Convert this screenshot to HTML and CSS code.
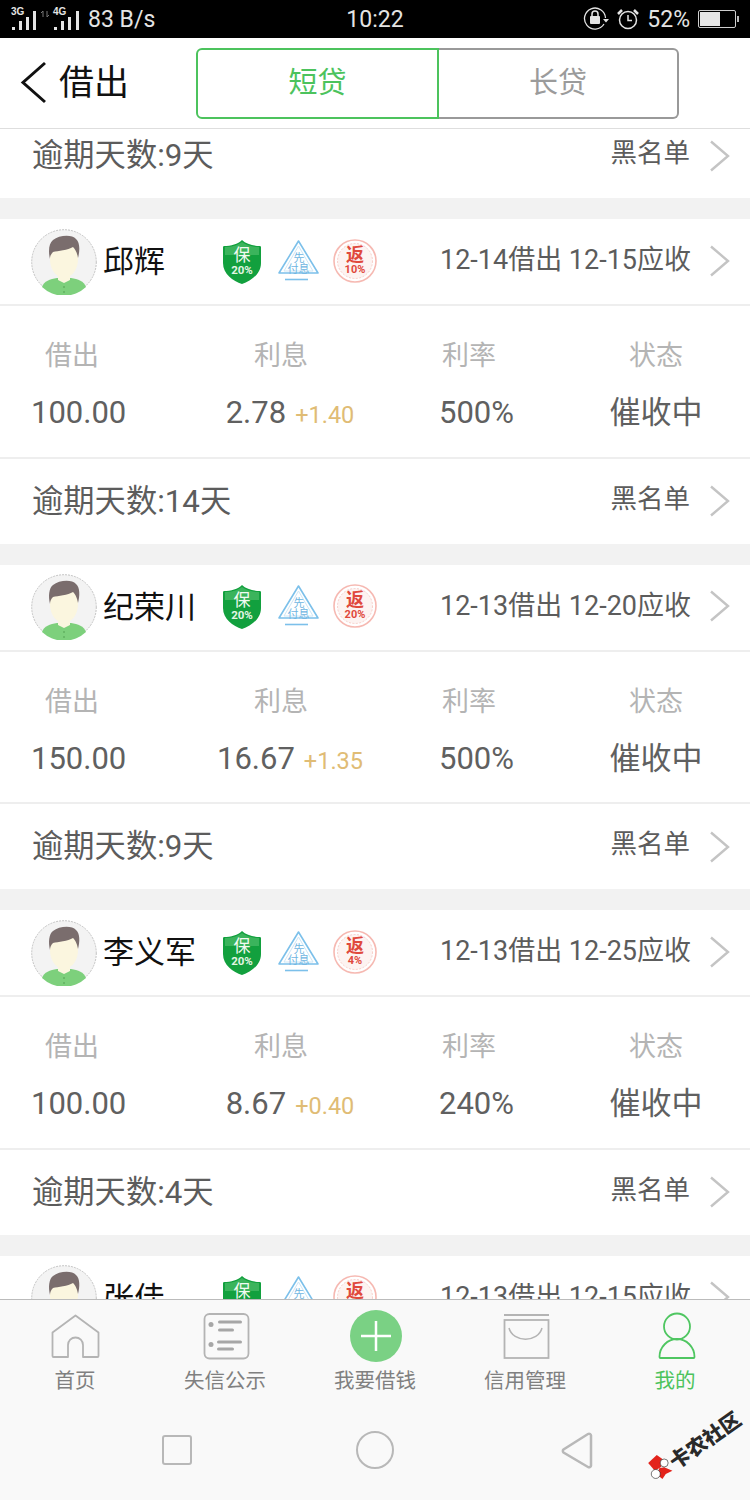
FILE: index.html
```html
<!DOCTYPE html>
<html lang="zh">
<head>
<meta charset="utf-8">
<title>借出</title>
<link rel="stylesheet" href="styles.css">
</head>
<body>
<svg class="defs" width="0" height="0">
  <symbol id="avatar" viewBox="0 0 66 66">
    <circle cx="33" cy="33" r="32.3" fill="#f3f3f3" stroke="#b5b5b5" stroke-width="0.8" stroke-dasharray="2 1"/>
    <path d="M11 58c2-6 8-8 15-9h14c7 1 13 3 15 9a32 32 0 0 1-44 0z" fill="#7dd07c"/>
    <path d="M19 30c0 10 5 15 8 17v4l6 3 6-3v-4c3-2 8-7 8-17V16H19z" fill="#fbf6df"/>
    <path d="M19 30c-2-8-1-16 3-19 6-5 19-6 23-1 4 3 4 12 2 19-1-6-3-9-5-11-5 3-15 4-20 5-2 2-3 4-3 7z" fill="#7a6d6d"/>
    <circle cx="33" cy="58" r="0.8" fill="#4f9c4e"/><circle cx="33" cy="63" r="0.8" fill="#4f9c4e"/>
  </symbol>
  <symbol id="shield" viewBox="0 0 40 46">
    <path d="M20 1c4 4 11 6 18 6 1 0 1 1 1 2v15c0 11-10 18-19 21C11 42 1 35 1 24V9c0-1 0-2 1-2 7 0 14-2 18-6z" fill="#12a03e"/>
    <path d="M20 3c4 3 10 5 17 5v8H3V8c7 0 13-2 17-5z" fill="#3bb45c"/>
  </symbol>
  <symbol id="triangle" viewBox="0 0 42 44">
    <path d="M20.500 2 L40 34 H1 Z" fill="#fff" stroke="#7cc0ea" stroke-width="1.6" stroke-linejoin="round"/>
    <path d="M20.500 7 L35 32 H6 Z" fill="none" stroke="#cfe7f6" stroke-width="1"/>
    <path d="M7 40.500 H30" stroke="#7cc0ea" stroke-width="1.6"/>
  </symbol>
  <symbol id="seal" viewBox="0 0 44 44">
    <circle cx="22" cy="22" r="21" fill="#fff" stroke="#f6b9b2" stroke-width="1.6"/>
    <circle cx="22" cy="22" r="17.5" fill="#fdf3f1" stroke="#f8cfca" stroke-width="1" stroke-dasharray="2 1.5"/>
  </symbol>
  <symbol id="chev" viewBox="0 0 20 32">
    <path d="M1 1.500 L18 16 L1 30.500" fill="none" stroke="#c4c4c4" stroke-width="2.4"/>
  </symbol>
</svg>

<div class="phone">
  <div class="status">
    <div class="status-left">
      <svg class="signal" width="84" height="30" viewBox="0 0 84 30">
        <text x="11" y="13" class="net">3G</text>
        <g fill="#e4e4e4"><rect x="12" y="25" width="3" height="3"/><rect x="19" y="19" width="3" height="9"/><rect x="26" y="15" width="3" height="13"/><rect x="33" y="9" width="3" height="19"/></g>
        <path d="M43 9V15M47 9V15M41 11L43 9M49 13L47 15" stroke="#777" stroke-width="1" fill="none"/>
        <text x="53" y="13" class="net">4G</text>
        <g fill="#e4e4e4"><rect x="54" y="25" width="3" height="3"/><rect x="61" y="19" width="3" height="9"/><rect x="68" y="15" width="3" height="13"/><rect x="76" y="9" width="3" height="19"/></g>
      </svg>
      <span class="speed">83 B/s</span>
    </div>
    <div class="clock">10:22</div>
    <div class="status-right">
      <svg width="26" height="24" viewBox="0 0 26 24" fill="none">
        <path d="M21 17A10.500 10.500 0 1 1 22.500 11" stroke="#e4e4e4" stroke-width="1.300"/>
        <path d="M20 12H26L23 15.500Z" fill="#e4e4e4"/>
        <rect x="7" y="9" width="10" height="8" rx="1" fill="#e4e4e4"/>
        <path d="M9 9V7a3 3 0 0 1 6 0V9" stroke="#e4e4e4" stroke-width="1.500"/>
      </svg>
      <svg class="alarm" width="22" height="22" viewBox="0 0 22 22" fill="none" stroke="#e4e4e4">
        <circle cx="11" cy="12" r="8.500" stroke-width="1.500"/>
        <path d="M11 7V12.500H15" stroke-width="1.500"/>
        <path d="M1 6L5 2M21 6L17 2" stroke-width="2.500"/>
      </svg>
      <span class="pct">52%</span>
      <div class="battery"><div class="battery-fill"></div></div>
      <div class="battery-tip"></div>
    </div>
  </div>

  <header class="nav">
    <svg class="back" width="28" height="44" viewBox="0 0 28 44"><path d="M25 2 L3 21.500 L25 41" fill="none" stroke="#111" stroke-width="3"/></svg>
    <h1 class="title">借出</h1>
    <div class="tabs">
      <div class="tab tab-on">短贷</div>
      <div class="tab tab-off">长贷</div>
    </div>
  </header>

  <main class="list">
    <div class="card card-first">
      <div class="over"><span class="over-text">逾期天数:9天</span><span class="black">黑名单</span><svg class="chev"><use href="#chev"/></svg></div>
    </div>

    <section class="card">
      <div class="head">
        <svg class="avatar"><use href="#avatar"/></svg>
        <span class="name">邱辉</span>
        <div class="badges">
          <div class="badge b-shield"><svg class="b-bg"><use href="#shield"/></svg><span class="s1">保</span><span class="s2">20%</span></div>
          <div class="badge b-tri"><svg class="b-bg"><use href="#triangle"/></svg><span class="t1">先</span><span class="t2">付息</span></div>
          <div class="badge b-seal"><svg class="b-bg"><use href="#seal"/></svg><span class="r1">返</span><span class="r2">10%</span></div>
        </div>
        <span class="date">12-14借出 12-15应收</span>
        <svg class="chev"><use href="#chev"/></svg>
      </div>
      <div class="stats">
        <div class="labels"><span>借出</span><span>利息</span><span>利率</span><span class="l4">状态</span></div>
        <div class="values"><span class="v1">100.00</span><span class="v2">2.78<em>+1.40</em></span><span class="v3">500%</span><span class="v4">催收中</span></div>
      </div>
      <div class="over"><span class="over-text">逾期天数:14天</span><span class="black">黑名单</span><svg class="chev"><use href="#chev"/></svg></div>
    </section>

    <section class="card">
      <div class="head">
        <svg class="avatar"><use href="#avatar"/></svg>
        <span class="name">纪荣川</span>
        <div class="badges">
          <div class="badge b-shield"><svg class="b-bg"><use href="#shield"/></svg><span class="s1">保</span><span class="s2">20%</span></div>
          <div class="badge b-tri"><svg class="b-bg"><use href="#triangle"/></svg><span class="t1">先</span><span class="t2">付息</span></div>
          <div class="badge b-seal"><svg class="b-bg"><use href="#seal"/></svg><span class="r1">返</span><span class="r2">20%</span></div>
        </div>
        <span class="date">12-13借出 12-20应收</span>
        <svg class="chev"><use href="#chev"/></svg>
      </div>
      <div class="stats">
        <div class="labels"><span>借出</span><span>利息</span><span>利率</span><span class="l4">状态</span></div>
        <div class="values"><span class="v1">150.00</span><span class="v2">16.67<em>+1.35</em></span><span class="v3">500%</span><span class="v4">催收中</span></div>
      </div>
      <div class="over"><span class="over-text">逾期天数:9天</span><span class="black">黑名单</span><svg class="chev"><use href="#chev"/></svg></div>
    </section>

    <section class="card">
      <div class="head">
        <svg class="avatar"><use href="#avatar"/></svg>
        <span class="name">李义军</span>
        <div class="badges">
          <div class="badge b-shield"><svg class="b-bg"><use href="#shield"/></svg><span class="s1">保</span><span class="s2">20%</span></div>
          <div class="badge b-tri"><svg class="b-bg"><use href="#triangle"/></svg><span class="t1">先</span><span class="t2">付息</span></div>
          <div class="badge b-seal"><svg class="b-bg"><use href="#seal"/></svg><span class="r1">返</span><span class="r2">4%</span></div>
        </div>
        <span class="date">12-13借出 12-25应收</span>
        <svg class="chev"><use href="#chev"/></svg>
      </div>
      <div class="stats">
        <div class="labels"><span>借出</span><span>利息</span><span>利率</span><span class="l4">状态</span></div>
        <div class="values"><span class="v1">100.00</span><span class="v2">8.67<em>+0.40</em></span><span class="v3">240%</span><span class="v4">催收中</span></div>
      </div>
      <div class="over"><span class="over-text">逾期天数:4天</span><span class="black">黑名单</span><svg class="chev"><use href="#chev"/></svg></div>
    </section>

    <section class="card">
      <div class="head">
        <svg class="avatar"><use href="#avatar"/></svg>
        <span class="name">张佳</span>
        <div class="badges">
          <div class="badge b-shield"><svg class="b-bg"><use href="#shield"/></svg><span class="s1">保</span><span class="s2">20%</span></div>
          <div class="badge b-tri"><svg class="b-bg"><use href="#triangle"/></svg><span class="t1">先</span><span class="t2">付息</span></div>
          <div class="badge b-seal"><svg class="b-bg"><use href="#seal"/></svg><span class="r1">返</span><span class="r2">10%</span></div>
        </div>
        <span class="date">12-13借出 12-15应收</span>
        <svg class="chev"><use href="#chev"/></svg>
      </div>
    </section>
  </main>

  <nav class="tabbar">
    <div class="tb-item">
      <svg class="tb-icon" width="50" height="48" viewBox="0 0 50 48" fill="none" stroke="#b4b4b4" stroke-width="1.800" stroke-linejoin="round">
        <path d="M25.500 1.500 L48.500 18.500 V42 a1 1 0 0 1 -1 1 H33 V31 a7.500 7.500 0 0 0 -15 0 V43 H3.500 a1 1 0 0 1 -1 -1 V18.500 Z"/>
      </svg>
      <span>首页</span>
    </div>
    <div class="tb-item">
      <svg class="tb-icon" width="50" height="48" viewBox="0 0 50 48" fill="none">
        <rect x="4.500" y="0" width="44" height="44.500" rx="5" stroke="#b4b4b4" stroke-width="1.800"/>
        <g fill="#a6a6a6"><circle cx="11" cy="10.500" r="2.500"/><circle cx="11" cy="30.500" r="2.500"/><rect x="18" y="6.500" width="24" height="3" rx="1.500"/><rect x="18" y="14.500" width="16" height="3" rx="1.500"/><rect x="17" y="26.500" width="25" height="3" rx="1.500"/><rect x="17" y="33.500" width="17" height="3" rx="1.500"/></g>
      </svg>
      <span>失信公示</span>
    </div>
    <div class="tb-item">
      <svg class="tb-icon" width="52" height="52" viewBox="0 0 52 52">
        <circle cx="26" cy="26" r="26" fill="#7ad184"/>
        <path d="M26 11V41M11 26H41" stroke="#fff" stroke-width="2.500"/>
      </svg>
      <span class="tb-plus">我要借钱</span>
    </div>
    <div class="tb-item">
      <svg class="tb-icon" width="50" height="48" viewBox="0 0 50 48" fill="none" stroke="#b4b4b4" stroke-width="1.800">
        <path d="M4 1H49" />
        <rect x="4.500" y="6" width="44" height="38"/>
        <path d="M9 14c4 15 29 15 33 0" stroke-width="1.500"/>
      </svg>
      <span>信用管理</span>
    </div>
    <div class="tb-item tb-on">
      <svg class="tb-icon" width="42" height="48" viewBox="0 0 42 48" fill="none" stroke="#4fc661" stroke-width="1.800">
        <circle cx="23" cy="12.500" r="13"/>
        <path d="M5.500 43c0-10 8-18 17.500-18s17.500 8 17.500 18a1 1 0 0 1-1 1H6.500a1 1 0 0 1-1-1z"/>
      </svg>
      <span>我的</span>
    </div>
  </nav>

  <div class="sysbar">
    <div class="sys-square"></div>
    <div class="sys-circle"></div>
    <svg class="sys-back" width="34" height="38" viewBox="0 0 34 38"><path d="M31 4 V33 a2 2 0 0 1 -3 2 L3.500 20.500 a2 2 0 0 1 0 -3 L28 2 a2 2 0 0 1 3 2 Z" fill="none" stroke="#b8b8b8" stroke-width="2.500"/></svg>
  </div>

  <div class="mark">
    <svg class="mark-logo" width="28" height="30" viewBox="0 0 28 30">
      <path d="M0.700 9L9.300 1L16 5.700L13.300 13.300L7.300 16.700Z" fill="#e3231b"/>
      <path d="M11.700 14.300L16.700 13.300L25 16.700L18.300 20L15 25L10 21Z" fill="#e3231b"/>
      <circle cx="16.700" cy="9" r="4" fill="#fff" stroke="#222" stroke-width="0.600"/>
      <circle cx="8.300" cy="20" r="4.500" fill="#fff" stroke="#222" stroke-width="0.600"/>
    </svg>
    <span class="mark-text">卡农社区</span>
  </div>
</div>
</body>
</html>
```

FILE: styles.css
```css
* { box-sizing: border-box; }
html, body { margin: 0; padding: 0; }
body { font-family: Roboto, "Noto Sans CJK SC", sans-serif; background: #fff; }
.defs { position: absolute; }
.phone { position: relative; width: 750px; height: 1500px; overflow: hidden; display: flex; flex-direction: column; background: #f9f9f9; }

/* status bar */
.status { height: 38px; flex: none; background: #000; color: #e4e4e4; display: flex; align-items: center; font-size: 23px; }
.status-left { display: flex; align-items: center; width: 345px; }
.signal { flex: none; margin-top: -4px; }
.net { font-size: 10px; fill: #e4e4e4; font-family: "Liberation Sans", sans-serif; font-weight: 700; }
.speed { margin-left: 4px; }
.clock { width: 60px; text-align: center; white-space: nowrap; }
.status-right { display: flex; align-items: center; justify-content: flex-end; width: 345px; gap: 7px; padding-right: 11px; }
.alarm { margin-left: 1px; }
.pct { margin-left: 1px; }
.battery { width: 38px; height: 18px; border: 1px solid #cfcfcf; border-radius: 2px; padding: 1px; margin-left: 1px; }
.battery-fill { width: 20px; height: 100%; background: #e6e6e6; }
.battery-tip { width: 2px; height: 6px; background: #bbb; margin-left: -6px; }

/* nav */
.nav { height: 91px; flex: none; background: #fff; border-bottom: 1px solid #dedede; display: flex; align-items: center; padding: 0 0 0 20px; }
.back { flex: none; margin-top: -1px; }
.title { margin: -8px 0 0 11px; font-size: 35px; font-weight: 400; color: #111; width: 137px; }
.tabs { display: flex; width: 483px; height: 71px; margin-top: 1px; }
.tab { display: flex; align-items: center; justify-content: center; font-size: 29px; background: #fff; padding-bottom: 7px; }
.tab-on { color: #4cc35d; border: 2px solid #4cc35d; border-radius: 6px 0 0 6px; width: 243px; }
.tab-off { color: #9b9b9b; border: 2px solid #999; border-left: 0; border-radius: 0 6px 6px 0; width: 240px; }

/* list */
.list { flex: 1; min-height: 0; overflow: hidden; background: #f2f2f2; display: flex; flex-direction: column; gap: 21px; border-bottom: 1px solid #bbb; }
.card { flex: none; background: #fff; }
.card-first { margin-top: -16px; }
.head { height: 87px; border-bottom: 2px solid #eee; display: flex; align-items: center; padding: 0 20px 2px 31px; }
.avatar { width: 66px; height: 66px; flex: none; margin-top: 2px; }
.name { font-size: 31px; color: #111; width: 119px; margin-left: 6px; margin-top: -4px; white-space: nowrap; flex: none; }
.badges { display: flex; width: 218px; gap: 13px; flex: none; margin-top: 2px; }
.badge { position: relative; flex: none; text-align: center; }
.b-bg { position: absolute; left: 0; top: 0; width: 100%; height: 100%; }
.badge span { position: absolute; left: 0; right: 0; white-space: nowrap; }
.b-shield { width: 40px; height: 46px; }
.s1 { top: 5px; font-size: 17px; line-height: 22px; color: #f2fbf3; }
.s2 { top: 24px; font-size: 11.500px; line-height: 14px; color: #e2f5e4; font-weight: 700; }
.b-tri { width: 42px; height: 44px; margin-left: 3px; }
.t1 { top: 14px; font-size: 11px; line-height: 12px; color: #6fb6e2; }
.t2 { top: 25px; font-size: 11px; line-height: 12px; color: #6fb6e2; margin-left: -1px; }
.b-seal { width: 44px; height: 44px; }
.r1 { top: 5px; font-size: 18px; line-height: 22px; color: #e0493c; font-weight: 700; }
.r2 { top: 25px; font-size: 11px; line-height: 12px; color: #e0493c; font-weight: 700; }
.date { font-size: 27px; color: #5c5c5c; white-space: nowrap; flex: none; width: 252px; text-align: right; margin: -6px 19px 0 -1px; }
.chev { width: 20px; height: 32px; flex: none; }
.stats { height: 152.670px; border-bottom: 2px solid #eee; padding-top: 30px; }
.labels { display: flex; font-size: 27px; color: #b4b4b4; line-height: 40px; }
.labels span { text-align: center; }
.labels span:nth-child(1) { width: 144px; }
.labels span:nth-child(2) { width: 274px; }
.labels span:nth-child(3) { width: 102px; }
.labels span.l4 { width: 188px; margin-left: 42px; }
.values { display: flex; align-items: baseline; color: #606060; font-size: 31px; margin-top: 16px; line-height: 42px; }
.v1 { width: 144px; padding-left: 31px; }
.v2 { width: 292px; text-align: center; white-space: nowrap; }
.v2 em { font-style: normal; font-size: 23.500px; color: #e0bc75; margin-left: 9px; }
.v3 { width: 126px; padding-left: 3px; }
.v4 { width: 188px; text-align: center; margin-top: -2px; }
.over { height: 85px; display: flex; align-items: center; padding: 0 20px 0 32px; }
.over-text { font-size: 31.300px; color: #5c5c5c; flex: 1; margin-top: -6px; }
.black { font-size: 26.500px; color: #5c5c5c; margin-right: 20px; margin-top: -10px; }

/* tab bar */
.tabbar { height: 112px; flex: none; display: flex; background: #f9f9f9; }
.tb-item { width: 150px; display: flex; flex-direction: column; align-items: center; font-size: 20.500px; color: #808080; padding-top: 14px; }
.tb-icon { height: 48px; flex: none; overflow: visible; }
.tb-item:nth-child(3) .tb-icon { height: 52px; margin: -4px 0 0 2px; }
.tb-item span { margin-top: 3px; line-height: 32px; }
.tb-on { color: #4cc35d; }

/* system nav */
.sysbar { height: 88px; flex: none; display: flex; background: #f9f9f9; padding-top: 23px; }
.sys-square { width: 30px; height: 30px; border: 2px solid #b8b8b8; border-radius: 3px; margin-left: 162px; }
.sys-circle { width: 38px; height: 38px; border: 2px solid #b8b8b8; border-radius: 50%; margin: -4px 0 0 164px; }
.sys-back { margin: -3px 0 0 166px; }

/* watermark */
.mark { position: absolute; left: 650px; top: 1462px; display: flex; align-items: center; transform: rotate(-35deg); transform-origin: left center; white-space: nowrap; }
.mark-logo { flex: none; transform: rotate(35deg); }
.mark-text { font-family: "Noto Sans CJK SC", sans-serif; font-weight: 900; font-size: 20.500px; color: #2a2a2a; margin-left: -3px; }
```
